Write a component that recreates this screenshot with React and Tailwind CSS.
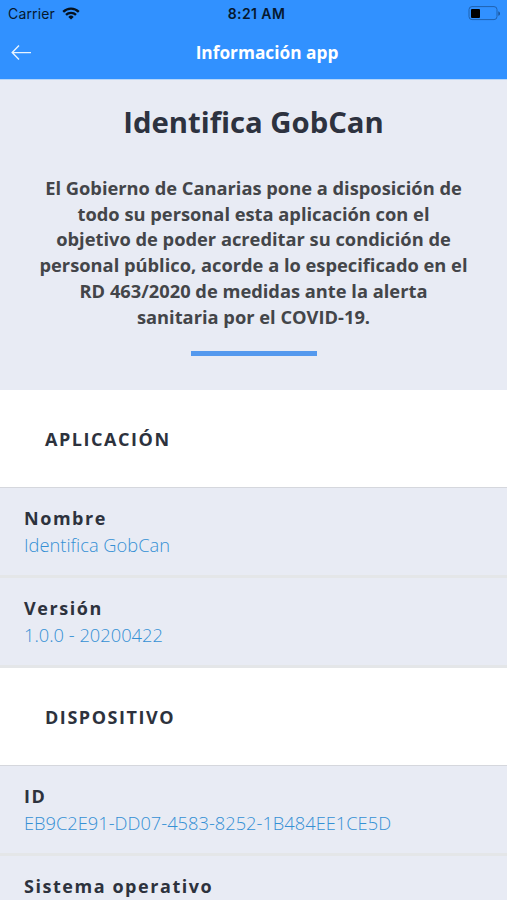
import React from "react";

const intro = [
  "El Gobierno de Canarias pone a disposición de",
  "todo su personal esta aplicación con el",
  "objetivo de poder acreditar su condición de",
  "personal público, acorde a lo especificado en el",
  "RD 463/2020 de medidas ante la alerta",
  "sanitaria por el COVID-19.",
];

const sections = [
  {
    title: "APLICACIÓN",
    items: [
      { label: "Nombre", value: "Identifica GobCan" },
      { label: "Versión", value: "1.0.0 - 20200422" },
    ],
  },
  {
    title: "DISPOSITIVO",
    items: [
      { label: "ID", value: "EB9C2E91-DD07-4583-8252-1B484EE1CE5D" },
      { label: "Sistema operativo", value: "" },
    ],
  },
];

function StatusBar() {
  return (
    <div className="grid h-[27px] grid-cols-3 items-center pl-2 pr-[6px] font-['Inter',sans-serif] text-[14px] text-[#06182e]">
      <div className="flex items-center gap-[7px]">
        <span className="tracking-[0.15px]">Carrier</span>
        <svg width="18" height="13" viewBox="0 0 18 13" fill="none" stroke="#06121f" strokeWidth="2.3">
          <path d="M1.2 4.9 A11 11 0 0 1 16.8 4.9" />
          <path d="M4 7.9 A7 7 0 0 1 14 7.9" />
          <path d="M9 12.6 L6.3 9.9 A3.8 3.8 0 0 1 11.7 9.9 Z" fill="#06121f" stroke="none" />
        </svg>
      </div>
      <span className="pl-[4px] text-center font-semibold tracking-[0.4px]">8:21 AM</span>
      <svg className="justify-self-end" width="33" height="15" viewBox="0 0 33 15" fill="none">
        <rect x="1" y="0.6" width="28" height="13" rx="3" stroke="#1f62b0" strokeWidth="1" />
        <rect x="3" y="3" width="9" height="9" rx="1" fill="#000" />
        <path d="M30.3 5.2 C32.6 6 32.6 9 30.3 9.8 Z" fill="#1b559b" />
      </svg>
    </div>
  );
}

function App() {
  return (
    <div className="h-[900px] w-[507px] overflow-hidden bg-[#e8ebf4] font-['Open_Sans',sans-serif]">
      <header className="h-[80px] border-b border-[#b5d6fa] bg-[#3191ff]">
        <StatusBar />
        <div className="grid h-[51px] grid-cols-[60px_1fr_33px] items-center">
          <svg className="ml-[11px]" width="21" height="16" viewBox="0 0 21 16" fill="none" stroke="#e8f4ff" strokeWidth="1.4">
            <path d="M20 7.6 H1.5 M8 0.6 L1.2 7.6 L8 14.6" />
          </svg>
          <h1 className="text-center text-[17.3px] font-bold text-white">Información app</h1>
        </div>
      </header>

      <section className="flex h-[310px] flex-col items-center text-center">
        <h2 className="mt-[22px] text-[29.3px] leading-[40px] font-bold text-[#2d323f]">Identifica GobCan</h2>
        <p className="mt-[33px] text-[18.3px] leading-[25.7px] font-bold text-[#434549]">
          {intro.map((line) => (
            <span key={line} className="block whitespace-nowrap">{line}</span>
          ))}
        </p>
        <div className="mt-[22px] h-[5px] w-[126px] bg-[#5499ee]" />
      </section>

      {sections.map((section) => (
        <section key={section.title}>
          <h3 className="flex h-[98px] items-center border-b border-[#d5d7dd] bg-white pt-[2px] pl-[45px] text-[18px] font-bold tracking-[1.55px] text-[#2d323d]">
            {section.title}
          </h3>
          {section.items.map((item) => (
            <div key={item.label} className="h-[90px] border-b-3 border-[#e4e6e8] pl-6 pt-[17px]">
              <div className="text-[18px] leading-[27px] font-bold tracking-[1.55px] text-[#2d323d]">{item.label}</div>
              <div className="text-[18.3px] leading-[26px] font-light text-[#3590d4]">{item.value}</div>
            </div>
          ))}
        </section>
      ))}
    </div>
  );
}

export default App;
